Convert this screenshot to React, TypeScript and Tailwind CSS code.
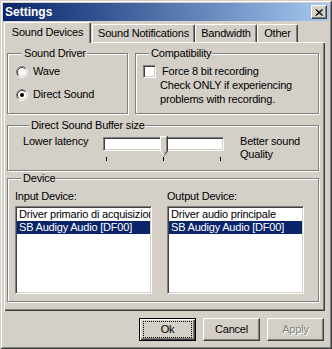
import React from "react";

const sunken =
  "border border-t-[#808080] border-l-[#808080] border-r-white border-b-white shadow-[inset_1px_1px_0_#404040,inset_-1px_-1px_0_#d4d0c8]";

const raised =
  "border border-t-white border-l-white border-r-[#404040] border-b-[#404040] shadow-[inset_-1px_-1px_0_#808080]";

function Radio({ checked }: { checked?: boolean }) {
  return (
    <svg width="12" height="12" viewBox="0 0 12 12" className="shrink-0">
      <circle cx="6" cy="6" r="4.5" fill="#fff" />
      <path d="M2.11 9.89A5.5 5.5 0 0 1 9.89 2.11" fill="none" stroke="#808080" />
      <path d="M9.89 2.11A5.5 5.5 0 0 1 2.11 9.89" fill="none" stroke="#fff" />
      <path d="M2.82 9.18A4.5 4.5 0 0 1 9.18 2.82" fill="none" stroke="#404040" />
      <path d="M9.18 2.82A4.5 4.5 0 0 1 2.82 9.18" fill="none" stroke="#d4d0c8" />
      {checked && <circle cx="6" cy="6" r="2" fill="#000" />}
    </svg>
  );
}

function Group({
  title,
  className,
  children,
}: {
  title: string;
  className?: string;
  children?: React.ReactNode;
}) {
  return (
    <fieldset
      className={`border border-[#808080] shadow-[1px_1px_0_#fff,inset_1px_1px_0_#fff] ${className ?? ""}`}
    >
      <legend className="ml-[6px] pl-[2px] pr-[1px] leading-[13px] bg-[#d4d0c8]">
        {title}
      </legend>
      {children}
    </fieldset>
  );
}

function TitleBar() {
  return (
    <div className="h-[18px] flex items-center justify-between pl-[2px] pr-[2px] bg-linear-to-r from-[#0a246a] to-[#a6caf0]">
      <span className="text-[12px] font-bold text-white leading-[14px] tracking-normal">Settings</span>
      <div className={`w-[16px] h-[14px] bg-[#d4d0c8] flex items-center justify-center ${raised}`}>
        <svg width="8" height="7" viewBox="0 0 8 7">
          <path d="M0.5 0.5L7 6.5M1.5 0.5L8 6.5M7 0.5L0.5 6.5M8 0.5L1.5 6.5" stroke="#000" strokeWidth="1" />
        </svg>
      </div>
    </div>
  );
}

const tabs = [
  { label: "Sound Devices", w: "w-[87px]", active: true },
  { label: "Sound Notifications", w: "w-[103px] ml-[1px]" },
  { label: "Bandwidth", w: "w-[62px]" },
  { label: "Other", w: "w-[41px]" },
];

function Tabs() {
  return (
    <div className="flex items-end h-[20px] mt-[1px] pl-[1px]">
      {tabs.map((t) => (
        <div
          key={t.label}
          className={`${t.w} flex items-center justify-center bg-[#d4d0c8] border-l border-t border-r border-white border-r-[#404040] rounded-t-[2px] shadow-[inset_-1px_0_0_#808080] ${
            t.active ? "h-[21px] -mb-[1px] relative z-10 pb-[2px]" : "h-[18px]"
          }`}
        >
          {t.label}
        </div>
      ))}
    </div>
  );
}

function Slider() {
  return (
    <div className="relative w-[121px] mt-[2px]">
      <div className={`h-[14px] bg-white ${sunken}`} />
      <div className="flex justify-between px-[3px] mt-[6px]">
        <div className="w-[1px] h-[4px] bg-black" />
        <div className="w-[1px] h-[4px] bg-black" />
        <div className="w-[1px] h-[4px] bg-black" />
      </div>
      <svg width="8" height="21" viewBox="0 0 8 21" className="absolute left-[57px] top-[-1px]">
        <path d="M0 0H8V15L4 19L0 15Z" fill="#d4d0c8" />
        <path d="M0.5 15.5V0.5H7" fill="none" stroke="#fff" />
        <path d="M0.5 15.5L4 19" fill="none" stroke="#fff" />
        <path d="M7.5 0V15.5L4 19.5" fill="none" stroke="#404040" />
        <path d="M6.5 1V15L4 17.5" fill="none" stroke="#808080" />
      </svg>
    </div>
  );
}

function ListBox({ items }: { items: string[] }) {
  return (
    <div className={`w-[137px] h-[88px] bg-white p-[1px] overflow-hidden ${sunken}`}>
      {items.map((it, i) => (
        <div
          key={it}
          className={`h-[13px] leading-[13px] px-[2px] whitespace-nowrap overflow-hidden ${
            i === 1 ? "bg-[#0a246a] text-white" : ""
          }`}
        >
          {it}
        </div>
      ))}
    </div>
  );
}

function Panel() {
  return (
    <div className="ml-[1px] w-[321px] h-[269px] border-l border-t border-white shadow-[inset_-1px_-1px_0_#404040,inset_-2px_-2px_0_#808080] pl-[2px] pt-[4px]">
      <div className="flex gap-[7px] w-[312px]">
        <Group title="Sound Driver" className="w-[121px] h-[67px] pl-[8px] pt-[5px]">
          <div className="flex items-center gap-[5px] h-[13px]">
            <Radio />
            <span>Wave</span>
          </div>
          <div className="flex items-center gap-[5px] h-[13px] mt-[10px]">
            <Radio checked />
            <span>Direct Sound</span>
          </div>
        </Group>
        <Group title="Compatibility" className="w-[184px] h-[67px] pl-[7px] pt-[5px]">
          <div className="flex items-center gap-[6px] h-[13px]">
            <div className={`w-[13px] h-[13px] bg-white ${sunken}`} />
            <span>Force 8 bit recording</span>
          </div>
          <div className="pl-[17px] leading-[14px]">
            <div>Check ONLY if experiencing</div>
            <div>problems with recording.</div>
          </div>
        </Group>
      </div>

      <Group title="Direct Sound Buffer size" className="w-[312px] h-[52px] mt-[5px] pl-[15px] pt-[3px]">
        <div className="flex items-start">
          <span className="w-[80px]">Lower latency</span>
          <Slider />
          <div className="ml-[16px]">
            <div>Better sound</div>
            <div>Quality</div>
          </div>
        </div>
      </Group>

      <Group title="Device" className="w-[312px] h-[130px] mt-[1px] pl-[7px] pt-[5px]">
        <div className="flex gap-[15px]">
          <div>
            <div>Input Device:</div>
            <div className="mt-[3px]">
              <ListBox items={["Driver primario di acquisizione", "SB Audigy Audio [DF00]"]} />
            </div>
          </div>
          <div>
            <div>Output Device:</div>
            <div className="mt-[3px]">
              <ListBox items={["Driver audio principale", "SB Audigy Audio [DF00]"]} />
            </div>
          </div>
        </div>
      </Group>
    </div>
  );
}

function Buttons() {
  return (
    <div className="flex justify-end gap-[7px] pr-[5px] mt-[7px]">
      <div className="w-[57px] h-[23px] border border-black shadow-[inset_1px_1px_0_#fff,inset_-1px_-1px_0_#404040,inset_-2px_-2px_0_#808080] px-[3px] py-[2px] flex">
        <div className="flex-1 border border-dotted border-black flex items-center justify-center">
          Ok
        </div>
      </div>
      <div className={`w-[57px] h-[23px] flex items-center justify-center ${raised}`}>Cancel</div>
      <div
        className={`w-[57px] h-[23px] flex items-center justify-center text-[#808080] [text-shadow:1px_1px_0_#fff] ${raised}`}
      >
        Apply
      </div>
    </div>
  );
}

export default function App() {
  return (
    <div className="w-[332px] h-[349px] bg-[#d4d0c8] p-[3px] shadow-[inset_1px_1px_0_#d4d0c8,inset_-1px_-1px_0_#404040,inset_2px_2px_0_#fff,inset_-2px_-2px_0_#808080] font-['Liberation_Sans',Arial,sans-serif] text-[11px] leading-[13px] tracking-[-0.2px] text-black select-none">
      <TitleBar />
      <Tabs />
      <Panel />
      <Buttons />
    </div>
  );
}
